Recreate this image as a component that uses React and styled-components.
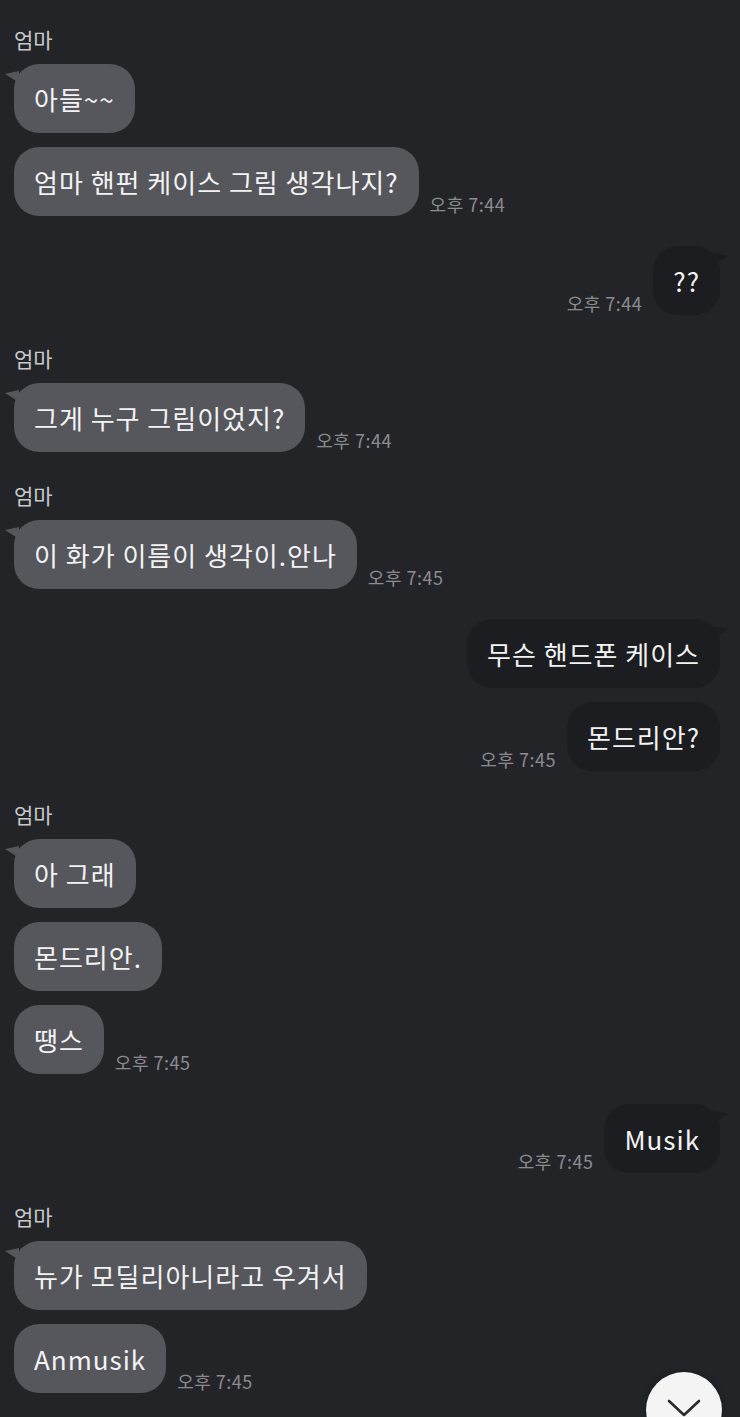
import React from 'react';
import styled, { createGlobalStyle, css } from 'styled-components';

const GlobalStyle = createGlobalStyle`
  html, body {
    margin: 0;
    padding: 0;
    background: #232428;
  }
  body {
    font-family: "Noto Sans CJK KR", "Noto Sans", sans-serif;
    overflow: hidden;
  }
`;

const ChatRoom = styled.div`
  min-height: 100vh;
  background: #232428;
  padding: 26px 20px 0 14px;
  box-sizing: border-box;
  display: flex;
  flex-direction: column;
  gap: 30px;
`;

const Group = styled.div`
  display: flex;
  flex-direction: column;
  align-items: ${(p) => (p.$mine ? 'flex-end' : 'flex-start')};
  gap: 14px;
`;

const Name = styled.div`
  color: #c8c9cc;
  font-size: 21px;
  line-height: 26px;
  margin-bottom: -2px;
`;

const Row = styled.div`
  display: flex;
  align-items: flex-end;
  flex-direction: ${(p) => (p.$mine ? 'row-reverse' : 'row')};
  gap: 11px;
`;

const Bubble = styled.div`
  position: relative;
  height: 69px;
  box-sizing: border-box;
  padding: 0 20px;
  display: flex;
  align-items: center;
  border-radius: 25px;
  font-size: 26px;
  letter-spacing: 1px;
  color: #f3f3f4;
  white-space: nowrap;
  background: ${(p) => (p.$mine ? '#1c1d20' : '#55575c')};

  ${(p) =>
    p.$tail &&
    css`
      &::before {
        content: '';
        position: absolute;
        top: 7px;
        width: 14px;
        height: 12px;
        background: inherit;
        ${p.$mine
          ? css`
              right: -8px;
              clip-path: polygon(0 0, 100% 3px, 0 100%);
            `
          : css`
              left: -9px;
              clip-path: polygon(0 3px, 100% 0, 100% 100%);
            `}
      }
    `}
`;

const Time = styled.span`
  color: #8b8c90;
  font-size: 18px;
  letter-spacing: 0.5px;
  line-height: 20px;
  padding-bottom: 2px;
  white-space: nowrap;
`;

const ScrollDown = styled.button`
  position: fixed;
  right: 18px;
  bottom: -31px;
  width: 76px;
  height: 76px;
  border-radius: 50%;
  border: none;
  background: #f4f4f5;
  padding: 0;
  display: flex;
  justify-content: center;
  padding-top: 26px;
  box-sizing: border-box;
  box-shadow: 0 0 6px rgba(0, 0, 0, 0.3);
`;

const chat = [
  { mine: false, msgs: ['아들~~', '엄마 핸펀 케이스 그림 생각나지?'], time: '오후 7:44' },
  { mine: true, msgs: ['??'], time: '오후 7:44' },
  { mine: false, msgs: ['그게 누구 그림이었지?'], time: '오후 7:44' },
  { mine: false, msgs: ['이 화가 이름이 생각이.안나'], time: '오후 7:45' },
  { mine: true, msgs: ['무슨 핸드폰 케이스', '몬드리안?'], time: '오후 7:45' },
  { mine: false, msgs: ['아 그래', '몬드리안.', '땡스'], time: '오후 7:45' },
  { mine: true, msgs: ['Musik'], time: '오후 7:45' },
  { mine: false, msgs: ['뉴가 모딜리아니라고 우겨서', 'Anmusik'], time: '오후 7:45' },
];

function App() {
  return (
    <>
      <GlobalStyle />
      <ChatRoom>
        {chat.map((g, gi) => (
          <Group key={gi} $mine={g.mine}>
            {!g.mine && <Name>엄마</Name>}
            {g.msgs.map((m, i) => (
              <Row key={i} $mine={g.mine}>
                <Bubble $mine={g.mine} $tail={i === 0}>
                  {m}
                </Bubble>
                {i === g.msgs.length - 1 && <Time>{g.time}</Time>}
              </Row>
            ))}
          </Group>
        ))}
      </ChatRoom>
      <ScrollDown aria-label="아래로">
        <svg width="34" height="20" viewBox="0 0 34 20">
          <path d="M2 3 L17 17 L32 3" fill="none" stroke="#2a2b2e" strokeWidth="2.6" strokeLinecap="round" strokeLinejoin="round" />
        </svg>
      </ScrollDown>
    </>
  );
}

export default App;
